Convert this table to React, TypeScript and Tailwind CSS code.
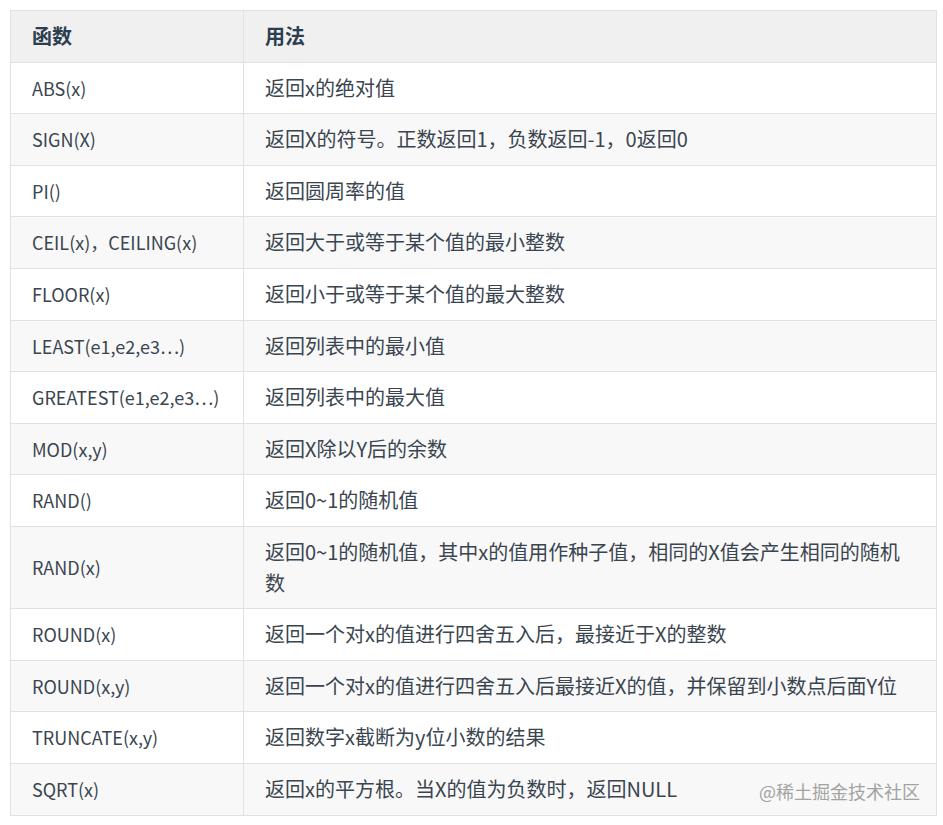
import React from "react";

const rows: [string, string][] = [
  ["ABS(x)", "返回x的绝对值"],
  ["SIGN(X)", "返回X的符号。正数返回1，负数返回-1，0返回0"],
  ["PI()", "返回圆周率的值"],
  ["CEIL(x)，CEILING(x)", "返回大于或等于某个值的最小整数"],
  ["FLOOR(x)", "返回小于或等于某个值的最大整数"],
  ["LEAST(e1,e2,e3…)", "返回列表中的最小值"],
  ["GREATEST(e1,e2,e3…)", "返回列表中的最大值"],
  ["MOD(x,y)", "返回X除以Y后的余数"],
  ["RAND()", "返回0~1的随机值"],
  ["RAND(x)", "返回0~1的随机值，其中x的值用作种子值，相同的X值会产生相同的随机数"],
  ["ROUND(x)", "返回一个对x的值进行四舍五入后，最接近于X的整数"],
  ["ROUND(x,y)", "返回一个对x的值进行四舍五入后最接近X的值，并保留到小数点后面Y位"],
  ["TRUNCATE(x,y)", "返回数字x截断为y位小数的结果"],
  ["SQRT(x)", "返回x的平方根。当X的值为负数时，返回NULL"],
];

export default function App() {
  return (
    <div
      className="bg-white w-[943px] h-[825px] pt-[10px] pl-[10px] relative"
      style={{ fontFamily: '"Noto Sans CJK SC", "Noto Sans", sans-serif' }}
    >
      <table className="w-[927px] border-collapse border border-[#dfe2e5] text-[18px] leading-[30.6px] text-[#3a4550]">
        <colgroup>
          <col className="w-[233px]" />
          <col />
        </colgroup>
        <thead>
          <tr className="bg-[#f0f0f0]">
            <th className="border border-[#dfe2e5] text-left text-[20px] font-bold text-[#2c3e50] px-[21px] py-[10px]">函数</th>
            <th className="border border-[#dfe2e5] text-left text-[20px] font-bold text-[#2c3e50] px-[21px] py-[10px]">用法</th>
          </tr>
        </thead>
        <tbody>
          {rows.map(([f, d], i) => (
            <tr key={i} className={i % 2 === 1 ? "bg-[#f8f8f8]" : "bg-white"}>
              <td className="border border-[#dfe2e5] px-[21px] py-[10px] whitespace-nowrap text-[18px]">{f}</td>
              <td className="border border-[#dfe2e5] px-[21px] py-[10px] text-[20px]">{d}</td>
            </tr>
          ))}
        </tbody>
      </table>
      <div className="absolute left-[759px] top-[777px] text-[18px] leading-[28px] text-[#a3a3a3]">
        @稀土掘金技术社区
      </div>
    </div>
  );
}
